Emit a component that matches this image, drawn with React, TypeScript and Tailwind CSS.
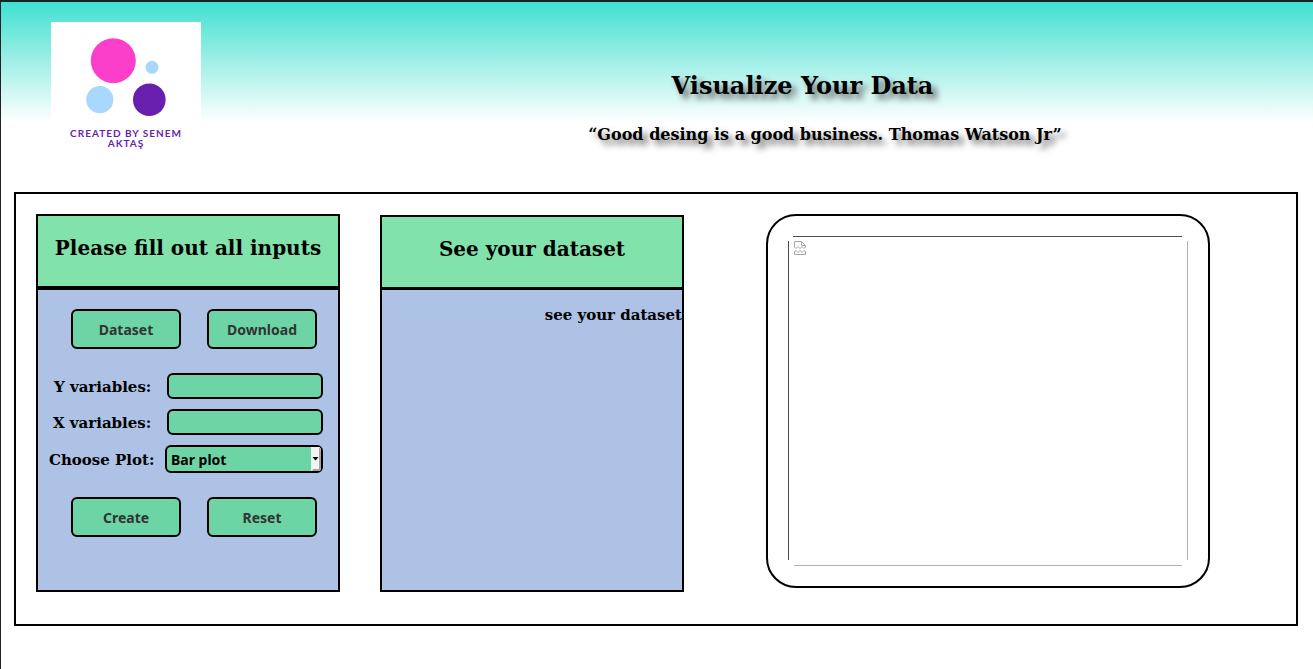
import React from "react";

const heading = "text-center text-xl leading-[30px] font-bold";
const label = "pt-[2px] text-[15px] font-bold";
const button =
  "h-10 w-[110px] rounded-[6px] border-2 border-black bg-[#6dd5a5] pt-[2px] font-['Noto_Sans','Open_Sans',sans-serif] text-sm font-bold text-[#333]";
const field =
  "rounded-[6px] border-2 border-black bg-[#6dd5a5] font-['Noto_Sans','Open_Sans',sans-serif] text-sm font-bold text-black";

function Logo() {
  return (
    <div className="flex h-[150px] w-[150px] shrink-0 flex-col items-center bg-white">
      <svg viewBox="0 0 150 106" className="h-[106px] w-[150px]" aria-hidden="true">
        <circle cx="62.3" cy="38.7" r="22.5" fill="#fb3fcb" />
        <circle cx="101" cy="45.3" r="6.5" fill="#a9d8ff" />
        <circle cx="48.8" cy="77.7" r="13.6" fill="#a9d8ff" />
        <circle cx="98.3" cy="77.8" r="16.3" fill="#691fae" />
      </svg>
      <p className="px-3 text-center font-['Lato',sans-serif] text-[10px] leading-[10px] font-bold tracking-widest text-[#691fae]">
        CREATED BY SENEM AKTAŞ
      </p>
    </div>
  );
}

function InputPanel() {
  return (
    <section className="flex w-[304px] shrink-0 flex-col border-2 border-black bg-[#adc2e5]">
      <div className="border-b-4 border-black bg-[#81e3ab] pt-[17px] pb-[23px]">
        <h2 className={heading}>Please fill out all inputs</h2>
      </div>
      <form className="flex flex-col pt-[19px] pb-[53px]" onSubmit={(e) => e.preventDefault()}>
        <div className="flex justify-center gap-[26px] pl-3">
          <button type="button" className={button}>Dataset</button>
          <button type="button" className={button}>Download</button>
        </div>
        <div className="mt-6 flex items-center justify-between pr-[15px] pl-4">
          <label htmlFor="y-variables" className={label}>Y variables:</label>
          <input id="y-variables" type="text" className={field + " h-[26px] w-[156px] px-1"} />
        </div>
        <div className="mt-[10px] flex items-center justify-between pr-[15px] pl-[15px]">
          <label htmlFor="x-variables" className={label}>X variables:</label>
          <input id="x-variables" type="text" className={field + " h-[26px] w-[156px] px-1"} />
        </div>
        <div className="mt-[10px] flex items-center justify-between pr-[15px] pl-[11px]">
          <label htmlFor="plot" className={label}>Choose Plot:</label>
          <div className="relative">
            <select id="plot" defaultValue="bar" className={field + " block h-7 w-[158px] appearance-none pt-[2px] pr-4 pl-1"}>
              <option value="bar">Bar plot</option>
              <option value="line">Line plot</option>
              <option value="scatter">Scatter plot</option>
            </select>
            <svg viewBox="0 0 10 24" className="pointer-events-none absolute top-[2px] right-[2px] h-6 w-[10px]" aria-hidden="true">
              <path d="M0 0H8Q10 0 10 4V20Q10 24 8 24H0Z" fill="#f3f3f3" />
              <path d="M8 1H9Q10 2 10 4V20Q10 24 8 24H1L2 22H8Z" fill="#a3a3a3" />
              <path d="M1.500 10H7.500L4.500 13.500Z" fill="#000" />
            </svg>
          </div>
        </div>
        <div className="mt-6 flex justify-center gap-[26px] pl-3">
          <button type="submit" className={button}>Create</button>
          <button type="reset" className={button}>Reset</button>
        </div>
      </form>
    </section>
  );
}

function DatasetPanel() {
  return (
    <section className="mt-px flex w-[304px] shrink-0 flex-col border-2 border-black bg-[#adc2e5]">
      <div className="border-b-3 border-black bg-[#81e3ab] pt-[17px] pb-[23px]">
        <h2 className={heading}>See your dataset</h2>
      </div>
      <p className="pt-[14px] text-right text-[15px] leading-[22px] font-bold">see your dataset</p>
    </section>
  );
}

function PlotPanel() {
  return (
    <section className="ml-[42px] shrink-0 self-start rounded-[30px] border-2 border-black p-5">
      <div role="img" aria-label="Plot" className="h-[330px] w-[400px]">
        <svg viewBox="0 0 400 330" className="h-full w-full" fill="none" aria-hidden="true">
          <path d="M5 .5H394M.5 5V324" stroke="#4c4c4c" />
          <path d="M6 329.5H394M399.5 5V324" stroke="#b2b2b2" />
          <path
            d="M6.500 11V5.500H13.500L17.500 9.500V11M13.500 5.500V9.500H17.500M6.500 11L8 12.500L10 10.500L12 12.500L14 10.500L16 12.500L17.500 11M6.500 18.500V15.500L8 14.500L10 16.500L12 14.500L14 16.500L16 14.500L17.500 15.500V18.500Z"
            stroke="#a6a6a6"
          />
        </svg>
      </div>
    </section>
  );
}

export default function App() {
  return (
    <div className="min-h-screen border-t-2 border-l border-t-[#182424] border-l-[#222] bg-white font-['DejaVu_Serif',serif] text-black">
      <header className="flex bg-[linear-gradient(#40e0d0,#fff_120px)] pt-5 pl-[50px]">
        <Logo />
        <div className="flex grow flex-col items-center pt-[49px] pl-[136px] text-center font-bold [text-shadow:5px_5px_6px_#666]">
          <h1 className="pr-[45px] text-2xl leading-[30px]">Visualize Your Data</h1>
          <p className="mt-[22px] text-base leading-6">“Good desing is a good business. Thomas Watson Jr”</p>
        </div>
      </header>
      <main className="mt-5 mr-[15px] ml-[13px] flex gap-10 border-2 border-black px-5 pt-5 pb-8">
        <InputPanel />
        <DatasetPanel />
        <PlotPanel />
      </main>
    </div>
  );
}
